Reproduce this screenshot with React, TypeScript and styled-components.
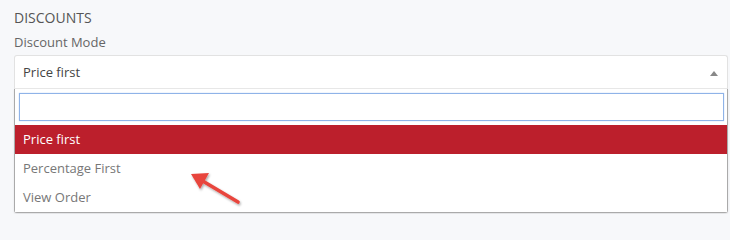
import React from 'react';
import styled, { createGlobalStyle } from 'styled-components';

const GlobalStyle = createGlobalStyle`
  html, body {
    margin: 0;
    padding: 0;
    background: #f7f8fa;
    font-family: "Open Sans", "Liberation Sans", sans-serif;
  }
`;

const options = ['Price first', 'Percentage First', 'View Order'];

const App = () => {
  return (
    <>
      <GlobalStyle />
      <Page>
        <SectionTitle>DISCOUNTS</SectionTitle>
        <FieldLabel>Discount Mode</FieldLabel>
        <SelectWrap>
          <SelectBox>
            <span>Price first</span>
            <Caret />
          </SelectBox>
          <Dropdown>
            <SearchRow>
              <SearchInput type="text" />
            </SearchRow>
            {options.map((o, i) => (
              <Option key={o} $active={i === 0}>{o}</Option>
            ))}
          </Dropdown>
          <Pointer viewBox="0 0 56 40" width="56" height="40">
            <defs>
              <filter id="sh" x="-20%" y="-20%" width="140%" height="140%">
                <feDropShadow dx="1" dy="1.5" stdDeviation="1" floodColor="#000" floodOpacity="0.35" />
              </filter>
            </defs>
            <g filter="url(#sh)">
              <line x1="50" y1="34" x2="13" y2="12" stroke="#e8453c" strokeWidth="3.6" strokeLinecap="round" />
              <polygon points="3,6 21,5 12,21" fill="#e8453c" />
            </g>
          </Pointer>
        </SelectWrap>
      </Page>
    </>
  );
};

export default App;

const Page = styled.div`
  width: 730px;
  height: 214px;
  box-sizing: border-box;
  padding: 8px 2px 0 14px;
  overflow: hidden;
`;

const SectionTitle = styled.div`
  font-size: 14px;
  font-weight: 500;
  line-height: 20px;
  color: #555;
  height: 20px;
`;

const FieldLabel = styled.div`
  margin-top: 4px;
  font-size: 13px;
  font-weight: 500;
  line-height: 20px;
  color: #666;
  height: 23px;
`;

const SelectWrap = styled.div`
  position: relative;
`;

const SelectBox = styled.div`
  height: 34px;
  box-sizing: border-box;
  border: 1px solid #e2e2e2;
  border-bottom-color: #e8e8e8;
  border-radius: 3px 3px 0 0;
  background: #fff;
  display: flex;
  align-items: center;
  justify-content: space-between;
  padding: 0 9px 0 8px;
  font-size: 13px;
  color: #444;
`;

const Caret = styled.span`
  width: 0;
  height: 0;
  border-left: 4px solid transparent;
  border-right: 4px solid transparent;
  border-bottom: 5px solid #888;
  margin-top: 2px;
`;

const Dropdown = styled.div`
  width: 714px;
  box-sizing: border-box;
  background: #fff;
  border: 1px solid #aaa;
  border-top: none;
  border-radius: 0 0 3px 3px;
  box-shadow: 0 1px 2px rgba(0, 0, 0, 0.1);
`;

const SearchRow = styled.div`
  padding: 4px 3px 4px 4px;
`;

const SearchInput = styled.input`
  display: block;
  width: 100%;
  height: 28px;
  box-sizing: border-box;
  border: 1px solid #8fb3e8;
  box-shadow: 0 0 1px #a9c6f0;
  outline: none;
  background: #fff;
`;

const Option = styled.div<{ $active?: boolean }>`
  height: 29px;
  line-height: 29px;
  padding-left: 8px;
  font-size: 13px;
  color: ${(p) => (p.$active ? '#fff' : '#777')};
  background: ${(p) => (p.$active ? '#bc1f2c' : '#fff')};
`;

const Pointer = styled.svg`
  position: absolute;
  left: 174px;
  top: 113px;
`;
